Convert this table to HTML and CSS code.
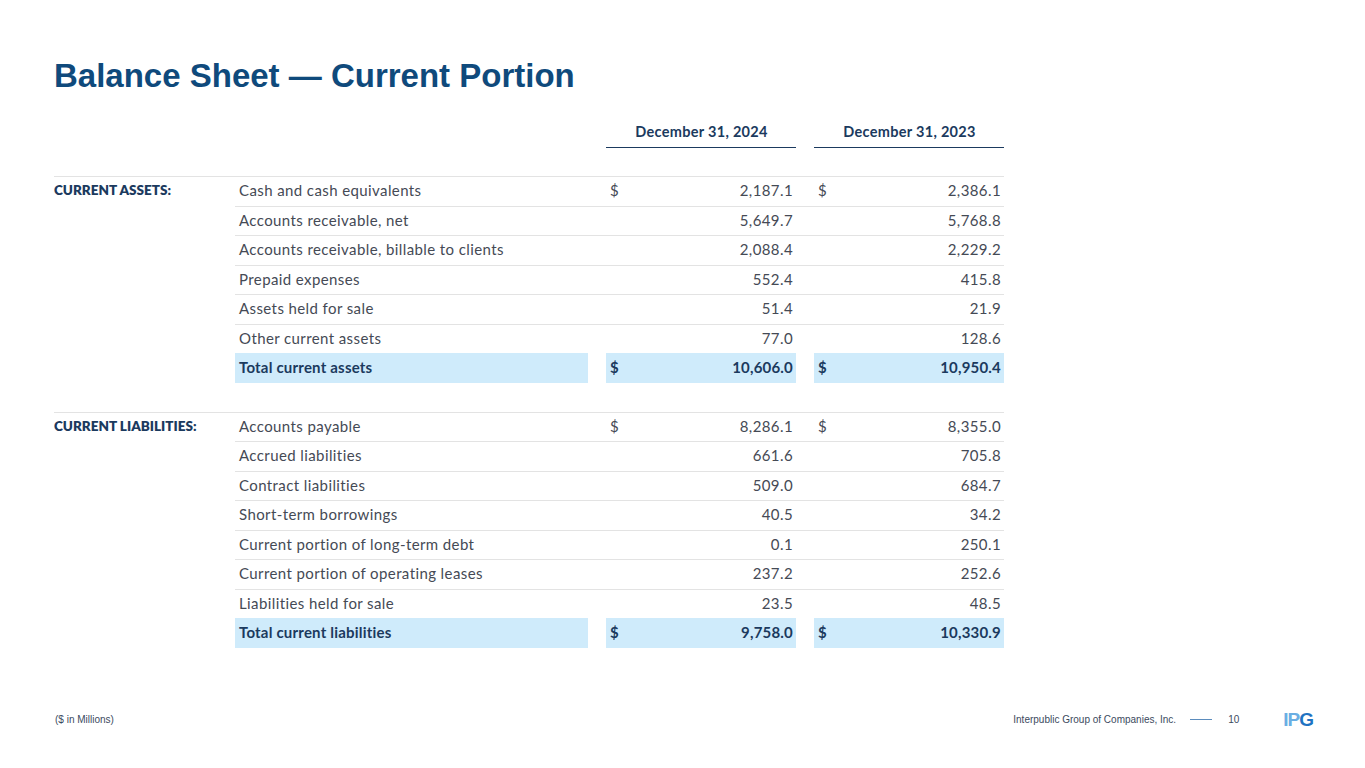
FILE: index.html
```html
<!DOCTYPE html>
<html>
<head>
<meta charset="utf-8">
<link rel="stylesheet" href="styles.css">
</head>
<body>
<div class="slide">
  <h1 class="title">Balance Sheet — Current Portion</h1>
  <div class="table">
    <div class="row head">
      <div class="c-label"></div>
      <div class="c-desc"></div>
      <div class="c-gap"></div>
      <div class="c-val hcell">December 31, 2024</div>
      <div class="c-gap"></div>
      <div class="c-val hcell">December 31, 2023</div>
    </div>
    <div class="spacer head-gap"></div>

    <div class="row first">
      <div class="c-label sec">CURRENT ASSETS:</div>
      <div class="c-desc">Cash and cash equivalents</div>
      <div class="c-gap"></div>
      <div class="c-val"><span>$</span><span>2,187.1</span></div>
      <div class="c-gap"></div>
      <div class="c-val"><span>$</span><span>2,386.1</span></div>
    </div>
    <div class="row">
      <div class="c-label"></div>
      <div class="c-desc">Accounts receivable, net</div>
      <div class="c-gap"></div>
      <div class="c-val"><span></span><span>5,649.7</span></div>
      <div class="c-gap"></div>
      <div class="c-val"><span></span><span>5,768.8</span></div>
    </div>
    <div class="row">
      <div class="c-label"></div>
      <div class="c-desc">Accounts receivable, billable to clients</div>
      <div class="c-gap"></div>
      <div class="c-val"><span></span><span>2,088.4</span></div>
      <div class="c-gap"></div>
      <div class="c-val"><span></span><span>2,229.2</span></div>
    </div>
    <div class="row">
      <div class="c-label"></div>
      <div class="c-desc">Prepaid expenses</div>
      <div class="c-gap"></div>
      <div class="c-val"><span></span><span>552.4</span></div>
      <div class="c-gap"></div>
      <div class="c-val"><span></span><span>415.8</span></div>
    </div>
    <div class="row">
      <div class="c-label"></div>
      <div class="c-desc">Assets held for sale</div>
      <div class="c-gap"></div>
      <div class="c-val"><span></span><span>51.4</span></div>
      <div class="c-gap"></div>
      <div class="c-val"><span></span><span>21.9</span></div>
    </div>
    <div class="row">
      <div class="c-label"></div>
      <div class="c-desc">Other current assets</div>
      <div class="c-gap"></div>
      <div class="c-val"><span></span><span>77.0</span></div>
      <div class="c-gap"></div>
      <div class="c-val"><span></span><span>128.6</span></div>
    </div>
    <div class="row total">
      <div class="c-label"></div>
      <div class="c-desc">Total current assets</div>
      <div class="c-gap"></div>
      <div class="c-val"><span>$</span><span>10,606.0</span></div>
      <div class="c-gap"></div>
      <div class="c-val"><span>$</span><span>10,950.4</span></div>
    </div>
    <div class="spacer"></div>

    <div class="row first">
      <div class="c-label sec">CURRENT LIABILITIES:</div>
      <div class="c-desc">Accounts payable</div>
      <div class="c-gap"></div>
      <div class="c-val"><span>$</span><span>8,286.1</span></div>
      <div class="c-gap"></div>
      <div class="c-val"><span>$</span><span>8,355.0</span></div>
    </div>
    <div class="row">
      <div class="c-label"></div>
      <div class="c-desc">Accrued liabilities</div>
      <div class="c-gap"></div>
      <div class="c-val"><span></span><span>661.6</span></div>
      <div class="c-gap"></div>
      <div class="c-val"><span></span><span>705.8</span></div>
    </div>
    <div class="row">
      <div class="c-label"></div>
      <div class="c-desc">Contract liabilities</div>
      <div class="c-gap"></div>
      <div class="c-val"><span></span><span>509.0</span></div>
      <div class="c-gap"></div>
      <div class="c-val"><span></span><span>684.7</span></div>
    </div>
    <div class="row">
      <div class="c-label"></div>
      <div class="c-desc">Short-term borrowings</div>
      <div class="c-gap"></div>
      <div class="c-val"><span></span><span>40.5</span></div>
      <div class="c-gap"></div>
      <div class="c-val"><span></span><span>34.2</span></div>
    </div>
    <div class="row">
      <div class="c-label"></div>
      <div class="c-desc">Current portion of long-term debt</div>
      <div class="c-gap"></div>
      <div class="c-val"><span></span><span>0.1</span></div>
      <div class="c-gap"></div>
      <div class="c-val"><span></span><span>250.1</span></div>
    </div>
    <div class="row">
      <div class="c-label"></div>
      <div class="c-desc">Current portion of operating leases</div>
      <div class="c-gap"></div>
      <div class="c-val"><span></span><span>237.2</span></div>
      <div class="c-gap"></div>
      <div class="c-val"><span></span><span>252.6</span></div>
    </div>
    <div class="row">
      <div class="c-label"></div>
      <div class="c-desc">Liabilities held for sale</div>
      <div class="c-gap"></div>
      <div class="c-val"><span></span><span>23.5</span></div>
      <div class="c-gap"></div>
      <div class="c-val"><span></span><span>48.5</span></div>
    </div>
    <div class="row total">
      <div class="c-label"></div>
      <div class="c-desc">Total current liabilities</div>
      <div class="c-gap"></div>
      <div class="c-val"><span>$</span><span>9,758.0</span></div>
      <div class="c-gap"></div>
      <div class="c-val"><span>$</span><span>10,330.9</span></div>
    </div>
  </div>

  <div class="footer">
    <div class="note">($ in Millions)</div>
    <div class="right">
      <span class="company">Interpublic Group of Companies, Inc.</span>
      <span class="dash"></span>
      <span class="page">10</span>
      <span class="logo"><span class="l1">IP</span><span class="l2">G</span></span>
    </div>
  </div>
</div>
</body>
</html>
```

FILE: styles.css
```css
* { box-sizing: border-box; }
html, body { margin: 0; padding: 0; background: #ffffff; }
body { font-family: "Lato", "Liberation Sans", sans-serif; }

.slide {
  width: 1365px;
  height: 768px;
  position: relative;
  padding: 56px 0 0 54px;
}

.title {
  margin: 0;
  font-family: "Liberation Sans", Arial, sans-serif;
  font-weight: 700;
  font-size: 33px;
  line-height: 40px;
  color: #0f4a7c;
}

.table {
  margin-top: 19px;
  width: 950px;
  font-size: 15px;
  letter-spacing: 0.4px;
  color: #454a55;
}

.row {
  display: grid;
  grid-template-columns: 181px 353px 18px 190px 18px 190px;
  height: 29.5px;
  align-items: stretch;
}

.row > div {
  display: flex;
  align-items: center;
  border-top: 1px solid #e3e3e3;
  padding-bottom: 2px;
}
.row > .c-label { border-top-color: transparent; }
.row.first > .c-label { border-top-color: #e3e3e3; }

.c-desc { padding-left: 4px; }
.c-val { justify-content: space-between; padding: 0 3px 2px 4px; }

.row.head { height: 33px; }
.row.head > div { border-top: none; padding-bottom: 0; }
.row.head > .hcell {
  justify-content: center;
  font-weight: 700;
  color: #1b3a5e;
  border-bottom: 1.5px solid #1b3a5e;
  font-size: 14.5px;
  letter-spacing: 0.3px;
}
.spacer { height: 29px; }
.spacer.head-gap { height: 28px; }

.sec {
  font-weight: 800;
  color: #1b3a5e;
  font-size: 13.5px;
  letter-spacing: 0;
}

.row.total > div { border-top-color: transparent; }
.row.total > .c-desc,
.row.total > .c-val {
  background: #cfebfb;
  font-weight: 700;
  color: #1b3a5e;
  letter-spacing: 0.2px;
}

.footer {
  position: absolute;
  left: 55px;
  right: 52px;
  top: 710px;
  display: flex;
  justify-content: space-between;
  align-items: center;
  font-family: "Liberation Sans", Arial, sans-serif;
  font-size: 10px;
  color: #3b4a5e;
}
.right { display: flex; align-items: center; }
.dash {
  width: 22px;
  height: 1.5px;
  background: #5b8cbd;
  margin: 0 16px 0 14px;
}
.page { margin-right: 44px; }
.logo {
  font-family: "Liberation Sans", Arial, sans-serif;
  font-weight: 700;
  font-size: 19px;
  letter-spacing: -1px;
  line-height: 1;
}
.l1 { color: #6aaee3; }
.l2 { color: #1f73c2; }
```
